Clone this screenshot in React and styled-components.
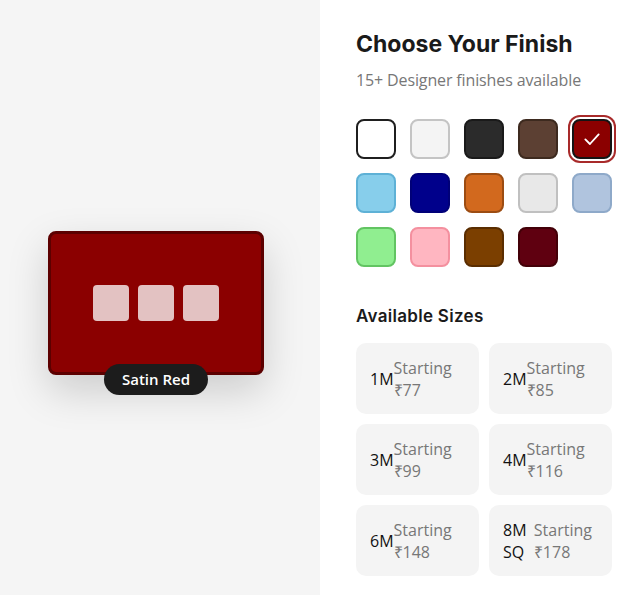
import styled, { createGlobalStyle } from 'styled-components'

const GlobalStyle = createGlobalStyle`
  html, body {
    margin: 0;
    padding: 0;
    background: #ffffff;
  }
  * {
    box-sizing: border-box;
  }
`;

const Page = styled.div`
  display: flex;
  width: 643px;
  height: 595px;
  font-family: "Open Sans", "Liberation Sans", sans-serif;
`;

const PreviewPanel = styled.div`
  width: 320px;
  flex-shrink: 0;
  background: #f5f5f5;
  display: flex;
  align-items: center;
  justify-content: center;
  padding: 10px 8px 0 0;
`;

const PanelCard = styled.div`
  position: relative;
  width: 216px;
  height: 144px;
  background: ${p => p.$color};
  border: 3px solid #5c0000;
  border-radius: 8px;
  box-shadow: 0 16px 40px rgba(0, 0, 0, 0.17);
  display: flex;
  align-items: center;
  justify-content: center;
  gap: 9px;
`;

const Socket = styled.div`
  width: 36px;
  height: 36px;
  border-radius: 4px;
  background: rgba(255, 255, 255, 0.76);
`;

const FinishBadge = styled.div`
  position: absolute;
  left: 50%;
  bottom: -23px;
  transform: translateX(-50%);
  background: #1c1c1c;
  color: #ffffff;
  font-size: 15px;
  font-weight: 600;
  line-height: 21px;
  padding: 5px 18px;
  border-radius: 16px;
  white-space: nowrap;
`;

const OptionsPanel = styled.div`
  flex: 1;
  padding: 30px 31px 0 36px;
  display: flex;
  flex-direction: column;
`;

const Title = styled.h2`
  margin: 0;
  font-family: Inter, "Liberation Sans", sans-serif;
  font-size: 23px;
  font-weight: 700;
  line-height: 28px;
  color: #1a1a1a;
`;

const Subtitle = styled.p`
  margin: 10px 0 0;
  font-size: 16px;
  line-height: 24px;
  color: #777777;
  letter-spacing: -0.13px;
`;

const SwatchGrid = styled.div`
  margin-top: 27px;
  display: grid;
  grid-template-columns: repeat(5, 40px);
  gap: 14px;
`;

const Swatch = styled.div`
  width: 40px;
  height: 40px;
  border-radius: 8px;
  background: ${p => p.$fill};
  border: 2px solid ${p => p.$edge};
  display: flex;
  align-items: center;
  justify-content: center;
  box-shadow: ${p => p.$active ? '0 0 0 2px #ffffff, 0 0 0 4px #a82a2a' : 'none'};
`;

const SectionTitle = styled.h3`
  margin: 37px 0 0;
  font-family: Inter, "Liberation Sans", sans-serif;
  font-size: 17px;
  font-weight: 600;
  line-height: 24px;
  letter-spacing: 0.3px;
  color: #1a1a1a;
`;

const SizeGrid = styled.div`
  margin-top: 15px;
  display: grid;
  grid-template-columns: repeat(2, 1fr);
  gap: 10px;
`;

const SizeCard = styled.div`
  height: 71px;
  background: #f4f4f4;
  border-radius: 10px;
  padding: 0 20px 0 14px;
  display: flex;
  align-items: center;
`;

const SizeLabel = styled.div`
  font-size: 16px;
  line-height: 22px;
  color: #111111;
`;

const Price = styled.div`
  display: flex;
  flex-direction: column;
  font-size: 16px;
  line-height: 22px;
  color: #777777;
  white-space: nowrap;
`;

const swatches = [
  { fill: '#ffffff', edge: '#1f1f1f' },
  { fill: '#f4f4f4', edge: '#c4c4c4' },
  { fill: '#2b2b2b', edge: '#1a1a1a' },
  { fill: '#5c4033', edge: '#3d2a1f' },
  { fill: '#8b0000', edge: '#141414', active: true },
  { fill: '#87ceeb', edge: '#5eb1d6' },
  { fill: '#00008b', edge: '#000078' },
  { fill: '#d2691e', edge: '#9c4c12' },
  { fill: '#e8e8e8', edge: '#c0c0c0' },
  { fill: '#b0c4de', edge: '#8ea9c9' },
  { fill: '#90ee90', edge: '#62c462' },
  { fill: '#ffb6c1', edge: '#f4909f' },
  { fill: '#7b3f00', edge: '#5a2d00' },
  { fill: '#5f0010', edge: '#430008' },
];

const sizes = [
  { label: '1M', price: '₹77' },
  { label: '2M', price: '₹85' },
  { label: '3M', price: '₹99' },
  { label: '4M', price: '₹116' },
  { label: '6M', price: '₹148' },
  { label: '8M SQ', price: '₹178' },
];

function Check() {
  return (
    <svg width="20" height="20" viewBox="0 0 24 24" fill="none" stroke="#ffffff" strokeWidth="2.2" strokeLinecap="round" strokeLinejoin="round">
      <polyline points="4 12.5 9.5 18 20 6.5" />
    </svg>
  )
}

export default function App() {
  return (
    <Page>
      <GlobalStyle />

      {/* PREVIEW */}
      <PreviewPanel>
        <PanelCard $color="#8b0000">
          <Socket />
          <Socket />
          <Socket />
          <FinishBadge>Satin Red</FinishBadge>
        </PanelCard>
      </PreviewPanel>

      {/* OPTIONS */}
      <OptionsPanel>
        <Title>Choose Your Finish</Title>
        <Subtitle>15+ Designer finishes available</Subtitle>

        <SwatchGrid>
          {swatches.map((s, i) => (
            <Swatch key={i} $fill={s.fill} $edge={s.edge} $active={s.active}>
              {s.active && <Check />}
            </Swatch>
          ))}
        </SwatchGrid>

        <SectionTitle>Available Sizes</SectionTitle>
        <SizeGrid>
          {sizes.map(s => (
            <SizeCard key={s.label}>
              <SizeLabel>{s.label}</SizeLabel>
              <Price>
                <span>Starting</span>
                <span>{s.price}</span>
              </Price>
            </SizeCard>
          ))}
        </SizeGrid>
      </OptionsPanel>
    </Page>
  )
}
